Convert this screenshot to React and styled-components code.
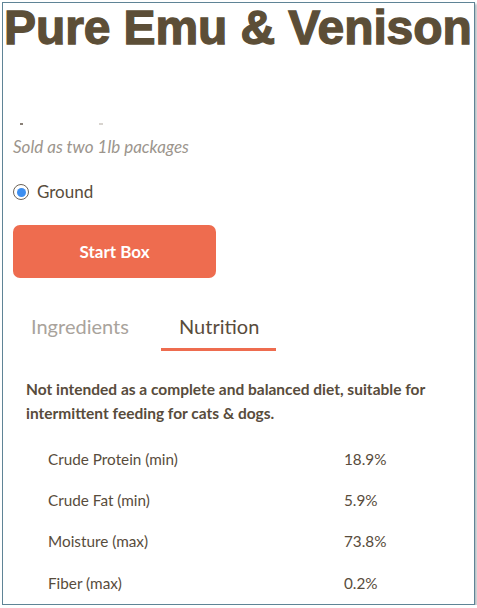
import React from "react";
import styled, { createGlobalStyle } from "styled-components";

const Global = createGlobalStyle`
  html, body { margin: 0; padding: 0; background: #ffffff; }
  body { font-family: Lato, "Open Sans", sans-serif; }
`;

const Frame = styled.div`
  box-sizing: border-box;
  margin: 2px 0 0 2px;
  width: 473px;
  height: 603px;
  border: 1.5px solid #5f8496;
  box-shadow: 2px 2px 2px rgba(90, 110, 120, 0.45);
  position: relative;
  overflow: hidden;
  background: #fff;
`;

const Title = styled.h1`
  margin: 1px 0 0 0;
  padding: 0 0 0 1px;
  font-family: "Liberation Sans", Arial, sans-serif;
  font-weight: 700;
  font-size: 48px;
  line-height: 48px;
  letter-spacing: -0.1px;
  -webkit-text-stroke: 1.3px #5c4e37;
  color: #5c4e37;
  white-space: nowrap;
`;

const Body = styled.div`
  padding: 0 0 0 10px;
  display: flex;
  flex-direction: column;
`;

const Fragments = styled.div`
  height: 4px;
  margin-top: 71px;
  display: flex;
  gap: 76px;
  padding-left: 7px;
`;

const Dot = styled.span`
  width: ${(p) => p.$w}px;
  height: 2px;
  background: ${(p) => p.$c};
`;

const Note = styled.p`
  margin: 8px 0 0 0;
  font-style: italic;
  font-size: 17px;
  line-height: 24px;
  color: #9c958d;
`;

const RadioRow = styled.label`
  margin-top: 21px;
  display: flex;
  align-items: center;
  gap: 8px;
  font-size: 17px;
  color: #584c3c;
  line-height: 24px;
`;

const RadioCircle = styled.span`
  box-sizing: border-box;
  width: 16px;
  height: 16px;
  border-radius: 50%;
  border: 1.5px solid #6b6257;
  display: flex;
  align-items: center;
  justify-content: center;
  &::after {
    content: "";
    width: 9px;
    height: 9px;
    border-radius: 50%;
    background: #3d8ef0;
  }
`;

const StartButton = styled.button`
  margin-top: 21px;
  width: 203px;
  height: 53px;
  border: none;
  border-radius: 7px;
  background: #ee6c4f;
  color: #fff;
  font-family: Lato, sans-serif;
  font-weight: 700;
  font-size: 17px;
  cursor: pointer;
`;

const Tabs = styled.div`
  margin-top: 28px;
  display: flex;
`;

const Tab = styled.div`
  padding: 8px 18px 10px 18px;
  width: ${(p) => p.$w}px;
  box-sizing: border-box;
  font-size: 20px;
  line-height: 24px;
  color: ${(p) => (p.$active ? "#584c3c" : "#a9a39c")};
  border-bottom: 3px solid ${(p) => (p.$active ? "#ee6c4f" : "transparent")};
`;

const Disclaimer = styled.p`
  margin: 26px 0 0 13px;
  font-weight: 700;
  font-size: 15.5px;
  line-height: 24px;
  color: #584c3c;
  width: 420px;
`;

const Table = styled.div`
  margin-top: 13px;
  display: flex;
  flex-direction: column;
`;

const Row = styled.div`
  display: grid;
  grid-template-columns: 296px 1fr;
  padding-left: 35px;
  height: 41.3px;
  align-items: center;
  font-size: 15.3px;
  color: #584c3c;
`;

const rows = [
  ["Crude Protein (min)", "18.9%"],
  ["Crude Fat (min)", "5.9%"],
  ["Moisture (max)", "73.8%"],
  ["Fiber (max)", "0.2%"],
];

export default function App() {
  return (
    <>
      <Global />
      <Frame>
        <Title>Pure Emu &amp; Venison</Title>
        <Body>
          <Fragments>
            <Dot $w={3} $c="#8a8178" />
            <Dot $w={4} $c="#d8d4cf" />
          </Fragments>
          <Note>Sold as two 1lb packages</Note>
          <RadioRow>
            <RadioCircle />
            Ground
          </RadioRow>
          <StartButton>Start Box</StartButton>
          <Tabs>
            <Tab $w={148}>Ingredients</Tab>
            <Tab $w={115} $active>Nutrition</Tab>
          </Tabs>
          <Disclaimer>
            Not intended as a complete and balanced diet, suitable for intermittent feeding for cats &amp; dogs.
          </Disclaimer>
          <Table>
            {rows.map(([k, v]) => (
              <Row key={k}>
                <span>{k}</span>
                <span>{v}</span>
              </Row>
            ))}
          </Table>
        </Body>
      </Frame>
    </>
  );
}
